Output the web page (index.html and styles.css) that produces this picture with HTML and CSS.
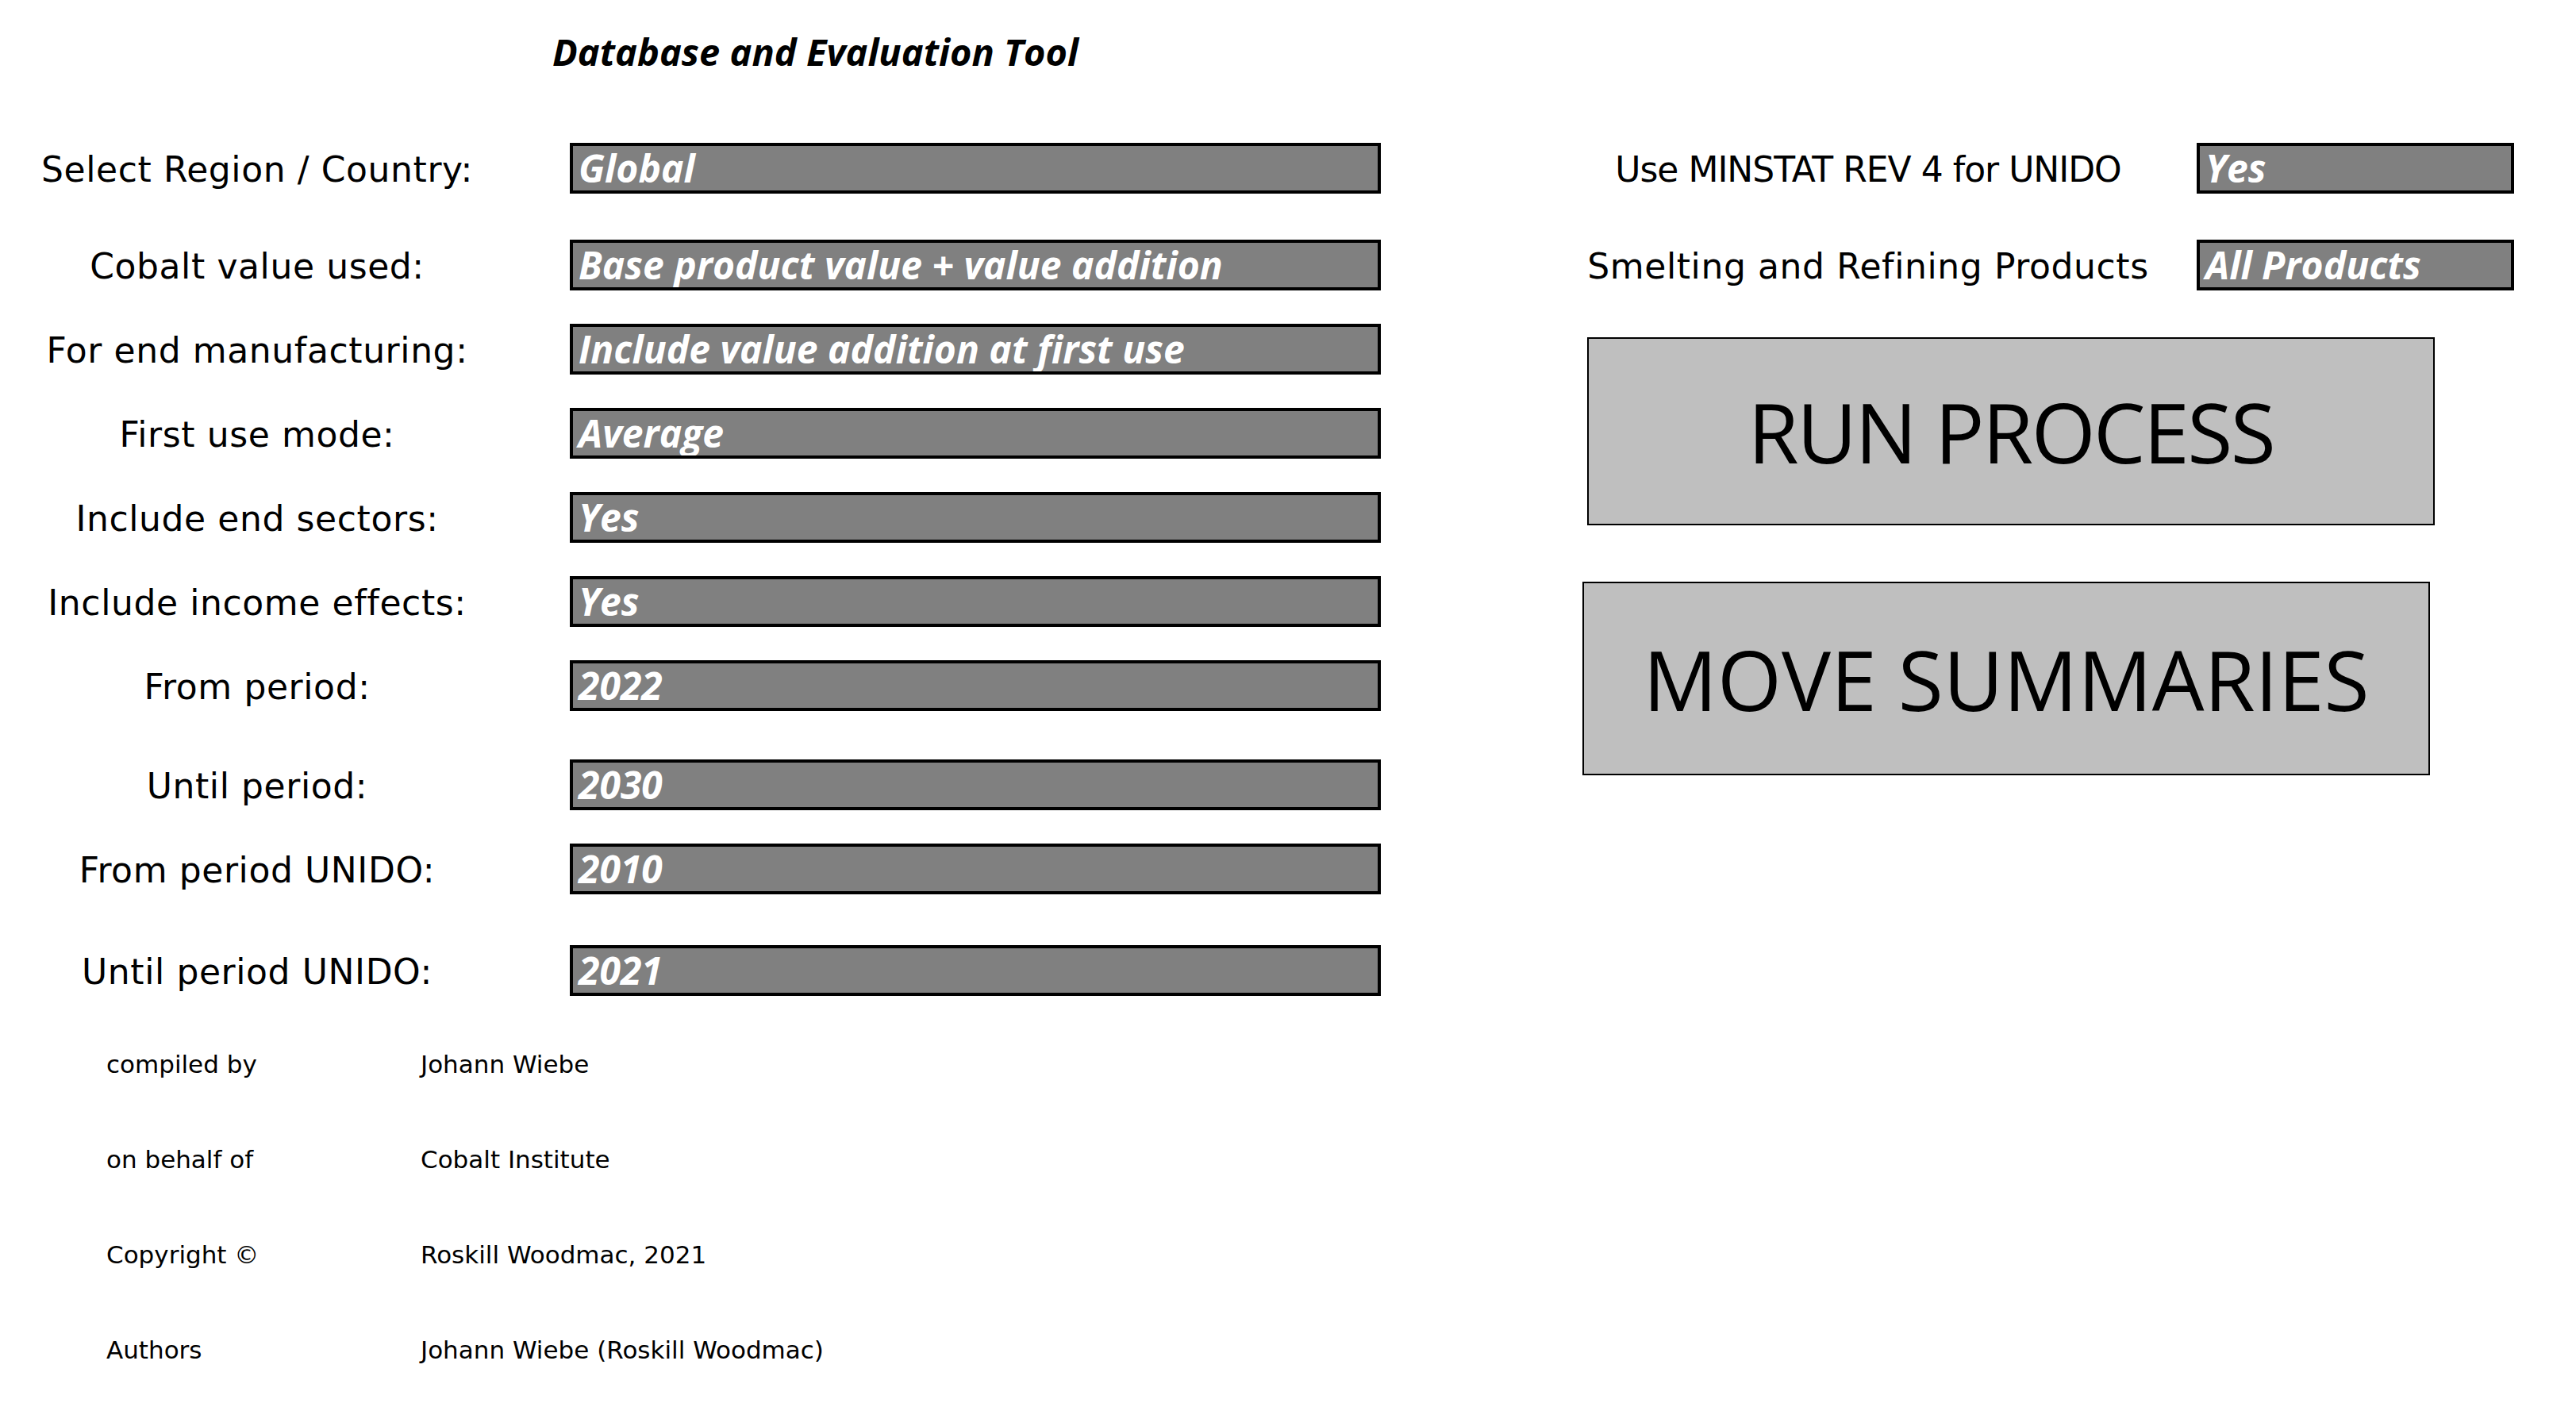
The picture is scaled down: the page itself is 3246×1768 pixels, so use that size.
FILE: index.html
```html
<!DOCTYPE html>
<html lang="en">
<head>
<meta charset="utf-8">
<title>Database and Evaluation Tool</title>
<link rel="stylesheet" href="styles.css">
</head>
<body>
<div class="page">
  <h1 class="title">Database and Evaluation Tool</h1>
  <div class="main">
    <div class="settings">
      <div class="row"><div class="label">Select Region / Country:</div><div class="field">Global</div></div>
      <div class="row row--spaced"><div class="label">Cobalt value used:</div><div class="field">Base product value + value addition</div></div>
      <div class="row"><div class="label">For end manufacturing:</div><div class="field">Include value addition at first use</div></div>
      <div class="row"><div class="label">First use mode:</div><div class="field">Average</div></div>
      <div class="row"><div class="label">Include end sectors:</div><div class="field">Yes</div></div>
      <div class="row"><div class="label">Include income effects:</div><div class="field">Yes</div></div>
      <div class="row"><div class="label">From period:</div><div class="field">2022</div></div>
      <div class="row row--wide"><div class="label">Until period:</div><div class="field">2030</div></div>
      <div class="row"><div class="label">From period UNIDO:</div><div class="field">2010</div></div>
      <div class="row row--wider"><div class="label">Until period UNIDO:</div><div class="field">2021</div></div>
    </div>
    <div class="side">
      <div class="row"><div class="label label--side label--caps">Use MINSTAT REV 4 for UNIDO</div><div class="field field--small">Yes</div></div>
      <div class="row row--spaced"><div class="label label--side">Smelting and Refining Products</div><div class="field field--small">All Products</div></div>
      <div class="button button--run"><span class="button-text button-text--tight">RUN PROCESS</span></div>
      <div class="button button--move"><span class="button-text">MOVE SUMMARIES</span></div>
    </div>
  </div>
  <div class="credits">
    <div class="credit-key">compiled by</div><div class="credit-value">Johann Wiebe</div>
    <div class="credit-key">on behalf of</div><div class="credit-value">Cobalt Institute</div>
    <div class="credit-key">Copyright ©</div><div class="credit-value">Roskill Woodmac, 2021</div>
    <div class="credit-key">Authors</div><div class="credit-value">Johann Wiebe (Roskill Woodmac)</div>
  </div>
</div>
</body>
</html>
```

FILE: styles.css
```css
html, body {
  margin: 0;
  padding: 0;
  background: #ffffff;
}

body {
  font-family: "DejaVu Sans", "Lato", sans-serif;
  color: #000000;
  width: 3246px;
  height: 1768px;
  overflow: hidden;
}

.page {
  display: flex;
  flex-direction: column;
}

.title {
  margin: 0 0 0 696px;
  height: 130px;
  line-height: 130px;
  font-family: "Open Sans", "Lato", sans-serif;
  font-size: 47px;
  font-weight: 700;
  font-style: italic;
  white-space: nowrap;
}

.main {
  display: flex;
  margin-top: 29px;
}

.settings {
  display: flex;
  flex-direction: column;
  margin-left: 14px;
}

.row {
  display: flex;
  align-items: center;
  height: 106px;
}

.row--spaced { margin-top: 16px; }
.row--wide { margin-top: 19px; }
.row--wider { margin-top: 22px; }

.label {
  width: 620px;
  margin-right: 84px;
  padding-top: 3px;
  text-align: center;
  font-size: 44px;
  letter-spacing: 0.6px;
  white-space: nowrap;
}

.field {
  box-sizing: border-box;
  width: 1022px;
  height: 64px;
  border: 4px solid #000000;
  background: #808080;
  color: #ffffff;
  font-family: "Open Sans", "Lato", sans-serif;
  font-size: 48px;
  font-weight: 700;
  font-style: italic;
  line-height: 56px;
  padding-left: 7px;
  white-space: nowrap;
  overflow: hidden;
}

.side {
  display: flex;
  flex-direction: column;
  margin-left: 250px;
}

.label--side {
  width: 728px;
  margin-right: 50px;
}

.label--caps {
  letter-spacing: -1px;
}

.field--small {
  width: 400px;
}

.button {
  box-sizing: border-box;
  display: flex;
  align-items: center;
  justify-content: center;
  width: 1068px;
  background: #bfbfbf;
  border: 2px solid #000000;
  font-family: "Open Sans", "Liberation Sans", sans-serif;
  font-size: 104px;
  color: #000000;
  white-space: nowrap;
}

.button-text--tight {
  letter-spacing: -2.5px;
}

.button--run {
  height: 237px;
  margin-top: 38px;
  margin-left: 10px;
}

.button--move {
  height: 244px;
  margin-top: 71px;
  margin-left: 4px;
}

.credits {
  display: grid;
  grid-template-columns: 396px auto;
  grid-auto-rows: 120px;
  align-items: center;
  margin-top: 5px;
  padding-left: 134px;
  font-size: 31px;
}

.credit-key,
.credit-value {
  white-space: nowrap;
}
```
